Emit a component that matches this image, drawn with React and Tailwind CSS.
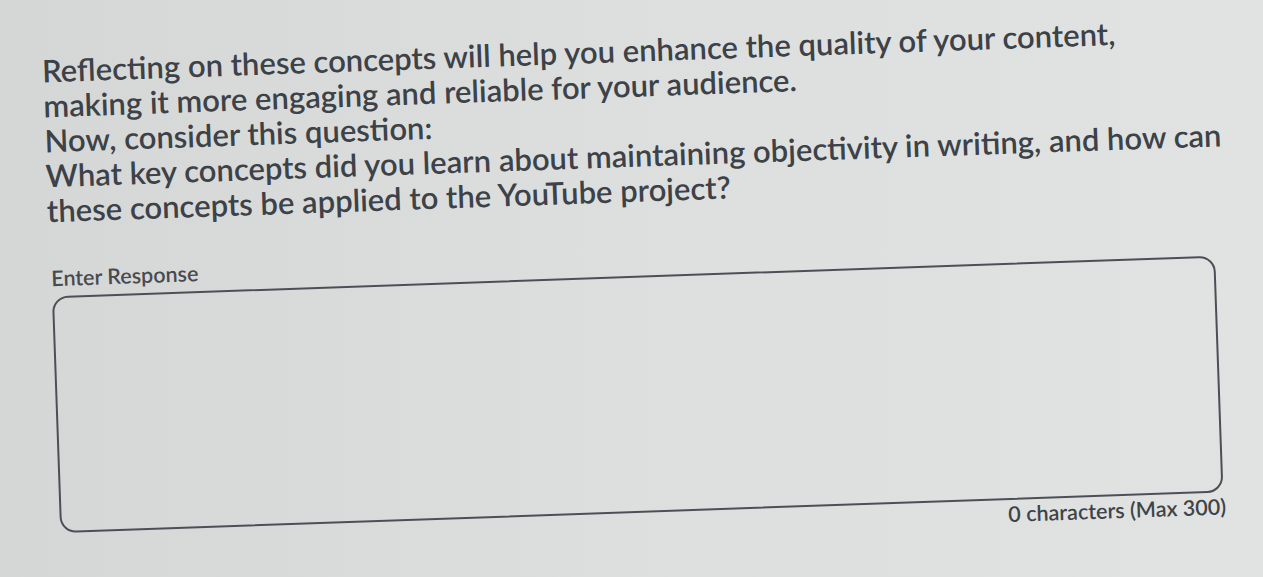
export default function App() {
  return (
    <div
      className="w-[1263px] h-[577px] overflow-hidden bg-linear-to-r from-[#d5d7d6] via-[#dddfde] to-[#e1e3e2] text-[#3c4248]"
      style={{ fontFamily: "Lato, 'Noto Sans', sans-serif" }}
    >
      <div className="w-[1263px] h-[577px] rotate-[-2deg] flex flex-col pt-[33px]">
        <div className="pl-[50px]">
          <p className="text-[31px] leading-[35px] font-semibold">
            Reflecting on these concepts will help you enhance the quality of your content,
            <br />
            making it more engaging and reliable for your audience.
          </p>
          <p className="text-[31px] leading-[35px] font-semibold">
            Now, consider this question:
            <br />
            What key concepts did you learn about maintaining objectivity in writing, and how can
            <br />
            these concepts be applied to the YouTube project?
          </p>
        </div>
        <div className="pl-[52px] mt-[36px] flex flex-col">
          <div className="text-[21.5px] leading-[28px] font-semibold text-[#464b51]">Enter Response</div>
          <div className="mt-[4px] w-[1164px] h-[237px] rounded-[16px] border-2 border-[#4c5056]" />
          <div className="w-[1166px] text-right text-[21.5px] leading-[28px] font-semibold text-[#3f4448]">
            0 characters (Max 300)
          </div>
        </div>
      </div>
    </div>
  );
}
